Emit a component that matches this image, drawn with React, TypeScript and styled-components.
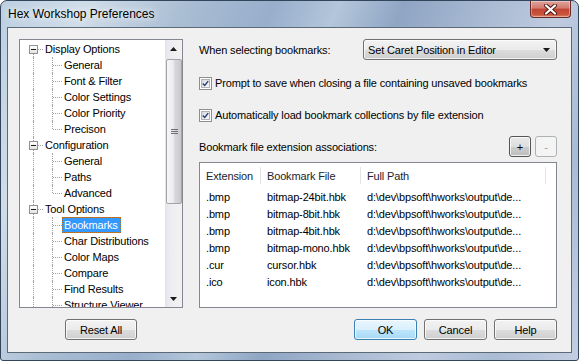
import styled, { createGlobalStyle } from "styled-components";

const GlobalStyle = createGlobalStyle`
  html, body {
    margin: 0;
    padding: 0;
    background: #ffffff;
  }
  body {
    font-family: "Liberation Sans", Arial, sans-serif;
    font-size: 11px;
    letter-spacing: -0.15px;
    color: #000;
    overflow: hidden;
  }
  * {
    box-sizing: border-box;
  }
`;

// Aero glass frame around the dialog
const Window = styled.div`
  width: 579px;
  height: 361px;
  display: flex;
  flex-direction: column;
  padding: 0 6px 7px;
  border: 1px solid #33455a;
  border-radius: 7px 7px 3px 3px;
  overflow: hidden;
  background: linear-gradient(
    112deg,
    #bccfe1 0%,
    #d0dde9 12%,
    #a9bdd3 26%,
    #98aecb 38%,
    #b3c6da 47%,
    #8fa5c4 56%,
    #a5b7d0 66%,
    #bfcbdf 78%,
    #aabbd4 88%,
    #c4cee2 100%
  );
`;

const TitleBar = styled.div`
  height: 26px;
  display: flex;
  justify-content: space-between;
  align-items: flex-start;
`;

const TitleText = styled.span`
  padding-left: 1px;
  line-height: 26px;
  font-size: 12px;
  letter-spacing: 0;
  color: #000;
  text-shadow: 0 0 6px rgba(255, 255, 255, 0.9), 0 0 10px rgba(255, 255, 255, 0.7);
`;

const CloseButton = styled.div`
  width: 41px;
  height: 17px;
  margin-right: 1px;
  display: flex;
  align-items: center;
  justify-content: center;
  border: 1px solid #6a2a28;
  border-top: none;
  border-radius: 0 0 4px 4px;
  background: linear-gradient(#e0a39b 0%, #d27a6e 45%, #c14432 50%, #c9553f 85%, #e0866a 100%);
  box-shadow: inset 0 0 0 1px rgba(255, 255, 255, 0.35);
`;

const Client = styled.div`
  flex: 1;
  display: grid;
  grid-template-columns: 164px 358px;
  grid-template-rows: 269px 21px;
  column-gap: 16px;
  row-gap: 11px;
  padding: 11px 14px 12px 11px;
  border: 1px solid #5c6977;
  background: #f0f0f0;
`;

// ---------- tree ----------
const TreePanel = styled.div`
  display: flex;
  border: 1px solid #828790;
  background: #fff;
  overflow: hidden;
`;

const TreeList = styled.div`
  flex: 1;
  padding: 1px 0 0 4px;
  overflow: hidden;
`;

const TreeRow = styled.div`
  height: 16px;
  display: flex;
  align-items: center;
  white-space: nowrap;
`;

const Branch = styled.span<{ $v: "full" | "top" | "bottom"; $h?: boolean }>`
  position: relative;
  flex: none;
  width: 19px;
  height: 16px;
  display: flex;
  align-items: center;

  &::before {
    content: "";
    position: absolute;
    left: 9px;
    top: ${({ $v }) => ($v === "bottom" ? "8px" : "0")};
    bottom: ${({ $v }) => ($v === "top" ? "8px" : "0")};
    border-left: 1px dotted #a0a0a0;
  }

  &::after {
    content: ${({ $h }) => ($h ? '""' : "none")};
    position: absolute;
    left: 10px;
    right: 0;
    top: 8px;
    border-top: 1px dotted #a0a0a0;
  }
`;

const Expander = styled.span`
  position: relative;
  z-index: 1;
  width: 9px;
  height: 9px;
  margin-left: 5px;
  border: 1px solid #919191;
  background: linear-gradient(#ffffff, #e2e2e2);

  &::after {
    content: "";
    position: absolute;
    left: 1px;
    top: 3px;
    width: 5px;
    height: 1px;
    background: #1c1c1c;
  }
`;

const NodeLabel = styled.span<{ $selected?: boolean }>`
  height: 16px;
  line-height: 14px;
  padding: 0 2px 0 1px;
  border: 1px ${({ $selected }) => ($selected ? "dotted #b26a1c" : "solid transparent")};
  background: ${({ $selected }) => ($selected ? "#3399ff" : "transparent")};
  color: ${({ $selected }) => ($selected ? "#fff" : "#000")};
`;

const ScrollBar = styled.div`
  width: 17px;
  flex: none;
  display: flex;
  flex-direction: column;
  background: linear-gradient(90deg, #e4e4ec 0%, #eeeef2 40%, #f2f2f2 100%);
`;

const ScrollArrow = styled.div`
  height: 17px;
  flex: none;
  display: flex;
  align-items: center;
  justify-content: center;
`;

const ScrollTrack = styled.div`
  flex: 1;
  padding-top: 2px;
`;

const ScrollThumb = styled.div`
  height: 145px;
  margin-left: 1px;
  border: 1px solid #a3a3a8;
  border-radius: 2px;
  display: flex;
  flex-direction: column;
  align-items: center;
  justify-content: center;
  gap: 1px;
  background: linear-gradient(90deg, #f6f6f8 0%, #ececee 45%, #d8d8dc 55%, #cacacd 100%);
`;

const GripLine = styled.span`
  width: 7px;
  height: 1px;
  background: #6e6e74;
`;

// ---------- buttons ----------
const Button = styled.div<{ $w: number; $default?: boolean; $disabled?: boolean; $hot?: boolean }>`
  width: ${({ $w }) => $w}px;
  height: 21px;
  display: flex;
  align-items: center;
  justify-content: center;
  border: 1px solid ${({ $default, $disabled, $hot }) =>
    $default ? "#3c7fb1" : $disabled ? "#adb2b5" : $hot ? "#555" : "#707070"};
  border-radius: 3px;
  color: ${({ $disabled }) => ($disabled ? "#a0a0a0" : "#000")};
  background: ${({ $default, $disabled, $hot }) =>
    $default
      ? "linear-gradient(#eaf6fd 0%, #d9f0fc 50%, #bee6fd 51%, #a7d9f5 100%)"
      : $disabled
      ? "#f4f4f4"
      : $hot
      ? "linear-gradient(#e8e8e8 0%, #dedede 50%, #cdcdcd 51%, #bdbdbd 100%)"
      : "linear-gradient(#f2f2f2 0%, #ebebeb 50%, #dddddd 51%, #cfcfcf 100%)"};
  box-shadow: inset 0 0 0 1px ${({ $disabled }) => ($disabled ? "#f4f4f4" : "rgba(255,255,255,0.75)")};
`;

const LeftFooter = styled.div`
  display: flex;
  justify-content: center;
`;

const RightFooter = styled.div`
  display: flex;
  justify-content: flex-end;
  gap: 7px;
`;

// ---------- right side ----------
const Settings = styled.div`
  display: flex;
  flex-direction: column;
`;

const SelectRow = styled.div`
  height: 21px;
  display: grid;
  grid-template-columns: 164px 1fr;
  align-items: center;
`;

const Select = styled.div`
  height: 21px;
  display: flex;
  align-items: center;
  justify-content: space-between;
  padding: 0 6px 0 4px;
  border: 1px solid #707070;
  border-radius: 3px;
  background: linear-gradient(#f2f2f2 0%, #ebebeb 50%, #dddddd 51%, #cfcfcf 100%);
  box-shadow: inset 0 0 0 1px rgba(255, 255, 255, 0.75);
`;

const CheckRow = styled.label<{ $top: number }>`
  height: 16px;
  margin-top: ${({ $top }) => $top}px;
  display: flex;
  align-items: center;
  gap: 3px;
`;

const CheckBox = styled.span`
  width: 13px;
  height: 13px;
  flex: none;
  display: flex;
  align-items: center;
  justify-content: center;
  border: 1px solid #8e8f8f;
  background: #fff;
  padding: 1px;
`;

const CheckInner = styled.span`
  width: 100%;
  height: 100%;
  display: flex;
  align-items: center;
  justify-content: center;
  border: 1px solid #aeb3b9;
  background: linear-gradient(135deg, #d4d8dd 0%, #eceef0 60%, #f8f8f8 100%);
`;

const AssocRow = styled.div`
  height: 21px;
  margin-top: 13px;
  display: flex;
  align-items: center;
  justify-content: space-between;
`;

const SmallButtons = styled.div`
  display: flex;
  gap: 4px;
`;

const ListView = styled.div`
  height: 146px;
  margin-top: 5px;
  border: 1px solid #828790;
  background: #fff;
  overflow: hidden;
`;

const HeaderRow = styled.div`
  height: 25px;
  display: flex;
  align-items: center;
`;

const HeaderCell = styled.div<{ $w: number }>`
  width: ${({ $w }) => $w}px;
  height: 17px;
  flex: none;
  display: flex;
  align-items: center;
  padding-left: 6px;
  border-right: 1px solid #e3e3e3;
  color: #202530;
`;

const ListRow = styled.div`
  height: 17px;
  display: flex;
  align-items: center;
`;

const ListCell = styled.div<{ $w: number }>`
  width: ${({ $w }) => $w}px;
  flex: none;
  padding-left: 6px;
  white-space: nowrap;
  overflow: hidden;
`;

type TreeItem = {
  label: string;
  root?: boolean;
  first?: boolean;
  last?: boolean;
  selected?: boolean;
};

const treeItems: TreeItem[] = [
  { label: "Display Options", root: true, first: true },
  { label: "General" },
  { label: "Font & Filter" },
  { label: "Color Settings" },
  { label: "Color Priority" },
  { label: "Precison", last: true },
  { label: "Configuration", root: true },
  { label: "General" },
  { label: "Paths" },
  { label: "Advanced", last: true },
  { label: "Tool Options", root: true },
  { label: "Bookmarks", selected: true },
  { label: "Char Distributions" },
  { label: "Color Maps" },
  { label: "Compare" },
  { label: "Find Results" },
  { label: "Structure Viewer" },
];

const columns = [
  { title: "Extension", w: 61 },
  { title: "Bookmark File", w: 100 },
  { title: "Full Path", w: 185 },
];

const path = "d:\\dev\\bpsoft\\hworks\\output\\de...";

const associations = [
  [".bmp", "bitmap-24bit.hbk", path],
  [".bmp", "bitmap-8bit.hbk", path],
  [".bmp", "bitmap-4bit.hbk", path],
  [".bmp", "bitmap-mono.hbk", path],
  [".cur", "cursor.hbk", path],
  [".ico", "icon.hbk", path],
];

function Arrow({ down }: { down?: boolean }) {
  return (
    <svg width="7" height="4" viewBox="0 0 7 4">
      <path d={down ? "M0 0h7L3.5 4z" : "M0 4h7L3.5 0z"} fill="#1a1a1a" />
    </svg>
  );
}

function Check() {
  return (
    <svg width="9" height="9" viewBox="0 0 9 9">
      <path d="M1 4.5 L3.5 7 L8 1.5" fill="none" stroke="#2a3a72" strokeWidth="1.8" />
    </svg>
  );
}

export default function App() {
  return (
    <>
      <GlobalStyle />
      <Window>
        <TitleBar>
          <TitleText>Hex Workshop Preferences</TitleText>
          <CloseButton>
            <svg width="15" height="11" viewBox="0 0 15 11">
              <path d="M3 1.5 L12 9.5 M12 1.5 L3 9.5" stroke="#4a1a14" strokeWidth="4" strokeLinecap="round" />
              <path d="M3 1.5 L12 9.5 M12 1.5 L3 9.5" stroke="#ffffff" strokeWidth="2.2" strokeLinecap="round" />
            </svg>
          </CloseButton>
        </TitleBar>

        <Client>
          <TreePanel>
            <TreeList>
              {treeItems.map((item, i) =>
                item.root ? (
                  <TreeRow key={i}>
                    <Branch $v={item.first ? "bottom" : "full"} $h>
                      <Expander />
                    </Branch>
                    <NodeLabel>{item.label}</NodeLabel>
                  </TreeRow>
                ) : (
                  <TreeRow key={i}>
                    <Branch $v="full" />
                    <Branch $v={item.last ? "top" : "full"} $h />
                    <NodeLabel $selected={item.selected}>{item.label}</NodeLabel>
                  </TreeRow>
                )
              )}
            </TreeList>
            <ScrollBar>
              <ScrollArrow>
                <Arrow />
              </ScrollArrow>
              <ScrollTrack>
                <ScrollThumb>
                  <GripLine />
                  <GripLine />
                  <GripLine />
                </ScrollThumb>
              </ScrollTrack>
              <ScrollArrow>
                <Arrow down />
              </ScrollArrow>
            </ScrollBar>
          </TreePanel>

          <Settings>
            <SelectRow>
              <span>When selecting bookmarks:</span>
              <Select>
                <span>Set Caret Position in Editor</span>
                <Arrow down />
              </Select>
            </SelectRow>

            <CheckRow $top={15}>
              <CheckBox>
                <CheckInner>
                  <Check />
                </CheckInner>
              </CheckBox>
              <span>Prompt to save when closing a file containing unsaved bookmarks</span>
            </CheckRow>

            <CheckRow $top={16}>
              <CheckBox>
                <CheckInner>
                  <Check />
                </CheckInner>
              </CheckBox>
              <span>Automatically load bookmark collections by file extension</span>
            </CheckRow>

            <AssocRow>
              <span>Bookmark file extension associations:</span>
              <SmallButtons>
                <Button $w={22} $hot>
                  +
                </Button>
                <Button $w={22} $disabled>
                  -
                </Button>
              </SmallButtons>
            </AssocRow>

            <ListView>
              <HeaderRow>
                {columns.map((c) => (
                  <HeaderCell key={c.title} $w={c.w}>
                    {c.title}
                  </HeaderCell>
                ))}
              </HeaderRow>
              {associations.map((row, i) => (
                <ListRow key={i}>
                  {row.map((text, j) => (
                    <ListCell key={j} $w={columns[j].w}>
                      {text}
                    </ListCell>
                  ))}
                </ListRow>
              ))}
            </ListView>
          </Settings>

          <LeftFooter>
            <Button $w={72}>Reset All</Button>
          </LeftFooter>

          <RightFooter>
            <Button $w={63} $default>
              OK
            </Button>
            <Button $w={63}>Cancel</Button>
            <Button $w={63}>Help</Button>
          </RightFooter>
        </Client>
      </Window>
    </>
  );
}
